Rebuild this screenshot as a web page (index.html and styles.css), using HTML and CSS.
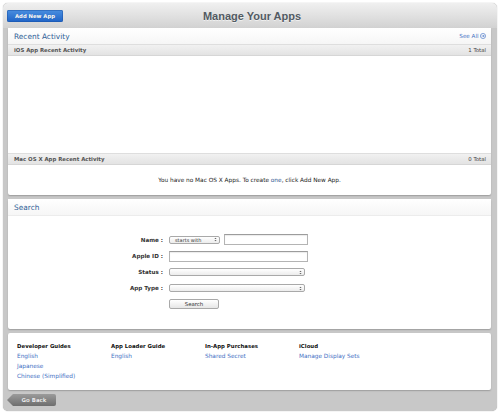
FILE: index.html
```html
<!DOCTYPE html>
<html lang="en">
<head>
<meta charset="utf-8">
<title>Manage Your Apps</title>
<link rel="stylesheet" href="styles.css">
</head>
<body>
<div class="frame">
  <header class="topbar">
    <div class="topbar-left"><a class="btn-blue" href="#">Add New App</a></div>
    <h1 class="title">Manage Your Apps</h1>
    <div class="topbar-right"></div>
  </header>

  <main class="content">
    <section class="panel panel-activity">
      <div class="panel-head">
        <h2 class="panel-title">Recent Activity</h2>
        <a class="see-all" href="#">See All
          <svg class="see-all-icon" viewBox="0 0 8 8" width="6" height="6"><circle cx="4" cy="4" r="3.4" fill="none" stroke="#4a78c8" stroke-width="0.9"/><path d="M2.2 4h3.4M4.2 2.6L5.6 4 4.2 5.4" fill="none" stroke="#4a78c8" stroke-width="0.9"/></svg>
        </a>
      </div>
      <div class="bar"><span>iOS App Recent Activity</span><span class="bar-count">1 Total</span></div>
      <div class="activity-empty"></div>
      <div class="bar"><span>Mac OS X App Recent Activity</span><span class="bar-count">0 Total</span></div>
      <p class="message"><span>You have no Mac OS X Apps. To create <a class="inline-link" href="#">one</a>, click Add New App.</span></p>
    </section>

    <section class="panel panel-search">
      <div class="panel-head">
        <h2 class="panel-title">Search</h2>
      </div>
      <div class="search-form">
        <label class="form-label">Name :</label>
        <div class="form-field name-field">
          <div class="select select-small"><span>starts with</span>
            <svg class="updown" viewBox="0 0 4 6" width="3" height="5"><path d="M0.5 2.3L2 0.6 3.5 2.3zM0.5 3.7L2 5.4 3.5 3.7z" fill="#666"/></svg>
          </div>
          <div class="text-input name-input"></div>
        </div>

        <label class="form-label">Apple ID :</label>
        <div class="form-field"><div class="text-input wide-input"></div></div>

        <label class="form-label">Status :</label>
        <div class="form-field"><div class="select select-wide">
          <span></span>
          <svg class="updown" viewBox="0 0 4 6" width="3" height="5"><path d="M0.5 2.3L2 0.6 3.5 2.3zM0.5 3.7L2 5.4 3.5 3.7z" fill="#666"/></svg>
        </div></div>

        <label class="form-label">App Type :</label>
        <div class="form-field"><div class="select select-wide">
          <span></span>
          <svg class="updown" viewBox="0 0 4 6" width="3" height="5"><path d="M0.5 2.3L2 0.6 3.5 2.3zM0.5 3.7L2 5.4 3.5 3.7z" fill="#666"/></svg>
        </div></div>

        <span class="form-label"></span>
        <div class="form-field"><a class="btn-search" href="#">Search</a></div>
      </div>
    </section>

    <section class="panel panel-links">
      <div class="link-col">
        <h3 class="link-head">Developer Guides</h3>
        <a class="link" href="#">English</a>
        <a class="link" href="#">Japanese</a>
        <a class="link" href="#">Chinese (Simplified)</a>
      </div>
      <div class="link-col">
        <h3 class="link-head">App Loader Guide</h3>
        <a class="link" href="#">English</a>
      </div>
      <div class="link-col">
        <h3 class="link-head">In-App Purchases</h3>
        <a class="link" href="#">Shared Secret</a>
      </div>
      <div class="link-col">
        <h3 class="link-head">iCloud</h3>
        <a class="link" href="#">Manage Display Sets</a>
      </div>
    </section>
  </main>

  <div class="bottom">
    <a class="btn-back" href="#">Go Back</a>
  </div>
</div>
</body>
</html>
```

FILE: styles.css
```css
* { box-sizing: border-box; }

html, body {
  margin: 0;
  padding: 0;
  background: #ffffff;
}

body {
  font-family: "DejaVu Sans", "Liberation Sans", sans-serif;
  color: #222;
}

a { text-decoration: none; }

.frame {
  margin: 3px;
  width: 494px;
  height: 408px;
  background: #c8c8c8;
  border-radius: 5px;
  box-shadow: 0 0 1px 0 #9a9a9a;
  display: flex;
  flex-direction: column;
  overflow: hidden;
}

/* top bar */
.topbar {
  height: 25px;
  flex: none;
  display: grid;
  grid-template-columns: 1fr auto 1fr;
  align-items: center;
  background: linear-gradient(#f0f0f0, #d2d2d2);
  padding-left: 4px;
}

.topbar-left { display: flex; align-items: center; }

.btn-blue {
  display: flex;
  align-items: center;
  justify-content: center;
  width: 56px;
  height: 12px;
  border-radius: 2px;
  background: linear-gradient(#4a8fe0, #1f63c6);
  box-shadow: inset 0 0 0 0.5px #1a55a8;
  color: #fff;
  font-weight: bold;
  font-size: 5.3px;
  text-shadow: 0 -0.5px 0 rgba(0, 0, 0, 0.35);
}

.title {
  margin: 0;
  font-family: "Liberation Sans", Arial, sans-serif;
  font-size: 11px;
  font-weight: bold;
  color: #525a62;
  text-shadow: 0 1px 0 rgba(255, 255, 255, 0.6);
}

/* content */
.content {
  flex: none;
  display: flex;
  flex-direction: column;
  gap: 4px;
  padding: 0 6px 0 5px;
}

.panel {
  background: #fff;
  border-radius: 2px;
  box-shadow: 0 1px 1.5px rgba(0, 0, 0, 0.22);
}

.panel-head {
  height: 16px;
  display: flex;
  align-items: center;
  justify-content: space-between;
  padding: 0 5px 0 6px;
  background: linear-gradient(#ffffff, #f6f6f6);
}

.panel-title {
  margin: 0;
  font-size: 7.4px;
  font-weight: normal;
  color: #2f5f97;
}

.see-all {
  display: flex;
  align-items: center;
  gap: 1.5px;
  font-size: 5.6px;
  color: #3f6fc4;
}

.see-all-icon { display: block; }

/* activity */
.panel-activity {
  height: 167px;
  display: flex;
  flex-direction: column;
}

.bar {
  height: 12px;
  flex: none;
  display: flex;
  align-items: center;
  justify-content: space-between;
  padding: 0 5px 0 6px;
  background: linear-gradient(#f1f1f1, #e3e3e3);
  border-top: 1px solid #dedede;
  border-bottom: 1px solid #d6d6d6;
  font-size: 5.4px;
  font-weight: bold;
  color: #555;
}

.bar-count {
  font-weight: normal;
  color: #444;
  font-size: 5.4px;
}

.activity-empty {
  height: 97px;
  flex: none;
}

.message {
  margin: 0;
  flex: 1;
  display: flex;
  align-items: center;
  justify-content: center;
  font-size: 5.8px;
  color: #222;
}

.inline-link { color: #2f5590; }

/* search */
.panel-search {
  height: 130px;
}

.panel-search .panel-head {
  border-bottom: 1px solid #ececec;
  height: 17px;
}

.search-form {
  display: grid;
  grid-template-columns: 155px 140px;
  grid-template-rows: 17px 16px 16px 16px 16px;
  column-gap: 6px;
  align-items: center;
  padding-top: 15px;
}

.form-label {
  text-align: right;
  font-size: 5.6px;
  font-weight: bold;
  color: #333;
}

.form-field {
  display: flex;
  align-items: center;
  gap: 4px;
}

.text-input {
  height: 11px;
  border: 1px solid #b4b4b4;
  border-top-color: #9c9c9c;
  background: #fff;
  box-shadow: inset 0 1px 1px rgba(0, 0, 0, 0.08);
}

.name-input { width: 84px; }
.wide-input { width: 139px; }

.select {
  height: 8px;
  border: 1px solid #a9a9a9;
  border-radius: 2px;
  background: linear-gradient(#ffffff, #ececec);
  display: flex;
  align-items: center;
  justify-content: space-between;
  padding: 0 2px 0 5px;
  font-size: 5px;
  color: #333;
}

.select-small { width: 51px; }
.select-wide { width: 136px; }

.updown { display: block; flex: none; }

.btn-search {
  display: flex;
  align-items: center;
  justify-content: center;
  width: 50px;
  height: 10px;
  border: 1px solid #a9a9a9;
  border-radius: 2px;
  background: linear-gradient(#ffffff, #e6e6e6);
  font-size: 5.4px;
  color: #333;
}

/* links */
.panel-links {
  height: 57px;
  display: grid;
  grid-template-columns: repeat(4, 94px);
  align-content: start;
  padding: 8px 0 0 9px;
}

.link-col {
  display: flex;
  flex-direction: column;
}

.link-head {
  margin: 0;
  height: 10px;
  line-height: 10px;
  font-size: 5.4px;
  font-weight: bold;
  color: #111;
}

.link {
  display: block;
  height: 10px;
  line-height: 10px;
  font-size: 5.8px;
  color: #4470c4;
}

/* bottom */
.bottom {
  flex: none;
  display: flex;
  align-items: flex-start;
  padding: 4px 0 0 4px;
}

.btn-back {
  display: flex;
  align-items: center;
  justify-content: center;
  width: 49px;
  height: 12px;
  padding-left: 5px;
  background: linear-gradient(#9b9b9b, #6e6e6e);
  border-radius: 0 2px 2px 0;
  clip-path: polygon(0 50%, 6px 0, 100% 0, 100% 100%, 6px 100%);
  color: #f2f2f2;
  font-size: 5.5px;
  font-weight: bold;
  text-shadow: 0 -0.5px 0 rgba(0, 0, 0, 0.5);
}
```
